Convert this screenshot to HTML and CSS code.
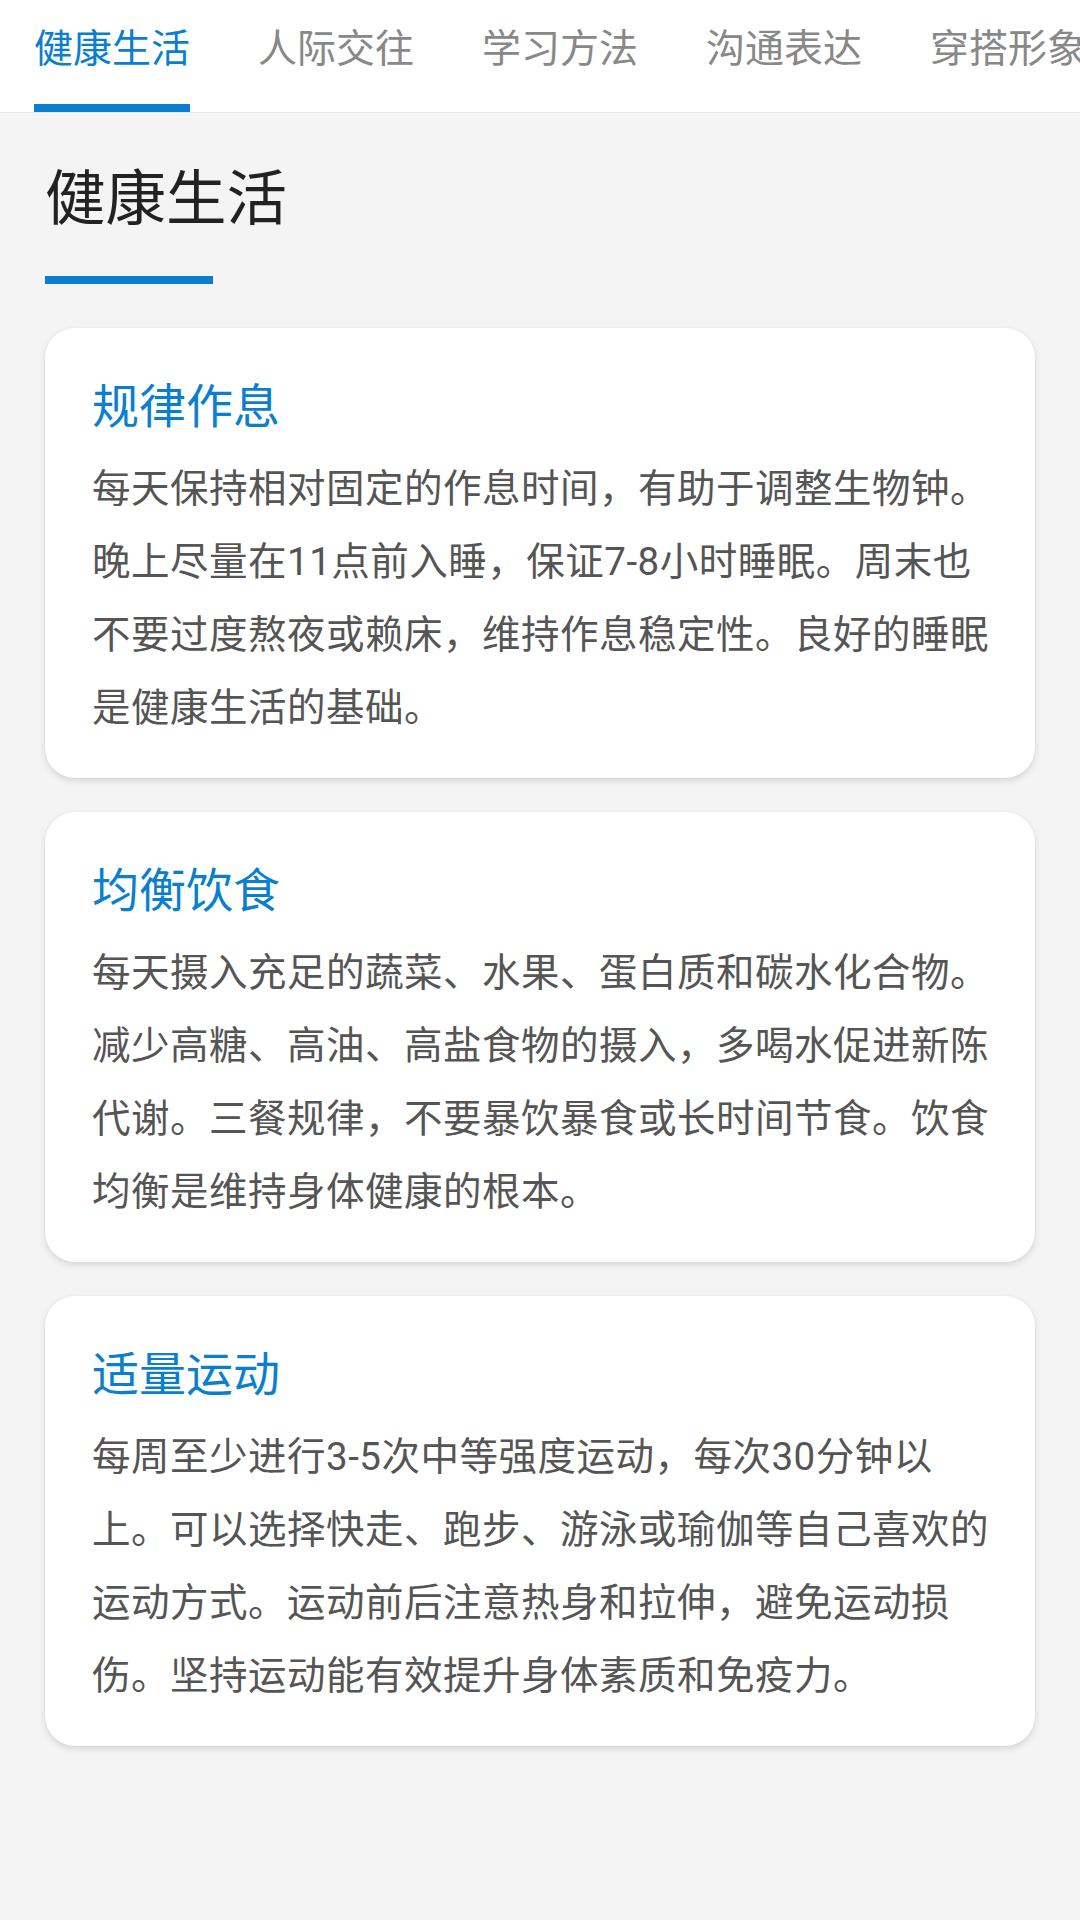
FILE: index.html
```html
<!DOCTYPE html>
<html lang="zh-CN">
<head>
    <meta charset="UTF-8">
    <meta name="viewport" content="width=device-width, initial-scale=1.0">
    <title>健康生活</title>
    <link rel="stylesheet" href="styles.css">
</head>
<body>
    <div class="tab-bar">
        <div class="tab active">健康生活</div>
        <div class="tab">人际交往</div>
        <div class="tab">学习方法</div>
        <div class="tab">沟通表达</div>
        <div class="tab">穿搭形象</div>
    </div>

    <div class="container">
        <h1 class="page-title">健康生活</h1>
        <div class="title-line"></div>

        <div class="card-list">
            <div class="card">
                <h2 class="card-title">规律作息</h2>
                <p class="card-text">每天保持相对固定的作息时间，有助于调整生物钟。晚上尽量在11点前入睡，保证7-8小时睡眠。周末也不要过度熬夜或赖床，维持作息稳定性。良好的睡眠是健康生活的基础。</p>
            </div>
            <div class="card">
                <h2 class="card-title">均衡饮食</h2>
                <p class="card-text">每天摄入充足的蔬菜、水果、蛋白质和碳水化合物。减少高糖、高油、高盐食物的摄入，多喝水促进新陈代谢。三餐规律，不要暴饮暴食或长时间节食。饮食均衡是维持身体健康的根本。</p>
            </div>
            <div class="card">
                <h2 class="card-title">适量运动</h2>
                <p class="card-text">每周至少进行3-5次中等强度运动，每次30分钟以上。可以选择快走、跑步、游泳或瑜伽等自己喜欢的运动方式。运动前后注意热身和拉伸，避免运动损伤。坚持运动能有效提升身体素质和免疫力。</p>
            </div>
        </div>
    </div>
</body>
</html>
```

FILE: styles.css
```css
* {
    margin: 0;
    padding: 0;
    box-sizing: border-box;
}

body {
    background: #f4f4f4;
    font-family: Roboto, "Noto Sans CJK SC", sans-serif;
    min-height: 1920px;
}

.tab-bar {
    display: flex;
    gap: 68px;
    padding: 0 34px;
    background: white;
    border-bottom: 1px solid #e8e8e8;
    overflow: hidden;
    white-space: nowrap;
}

.tab {
    flex-shrink: 0;
    padding: 23px 0 29px;
    font-size: 39px;
    line-height: 52px;
    color: #888888;
    border-bottom: 8px solid transparent;
}

.tab.active {
    color: #0a7fd0;
    border-bottom-color: #0a7fd0;
}

.container {
    padding: 47px 45px 44px;
}

.page-title {
    font-size: 60.5px;
    line-height: 80px;
    font-weight: 400;
    color: #222222;
}

.title-line {
    width: 168px;
    height: 8px;
    margin-top: 36px;
    background: #0a7fd0;
}

.card-list {
    display: flex;
    flex-direction: column;
    gap: 34px;
    margin-top: 44px;
}

.card {
    background: white;
    border-radius: 30px;
    padding: 49px 43px 34px 47px;
    box-shadow: 0 3px 6px rgba(0, 0, 0, 0.12), 0 0 2px rgba(0, 0, 0, 0.05);
}

.card-title {
    font-size: 47px;
    line-height: 60px;
    font-weight: 400;
    color: #0a7fd0;
}

.card-text {
    margin-top: 15px;
    font-size: 38.5px;
    line-height: 73px;
    letter-spacing: 0.5px;
    color: #555555;
}
```
